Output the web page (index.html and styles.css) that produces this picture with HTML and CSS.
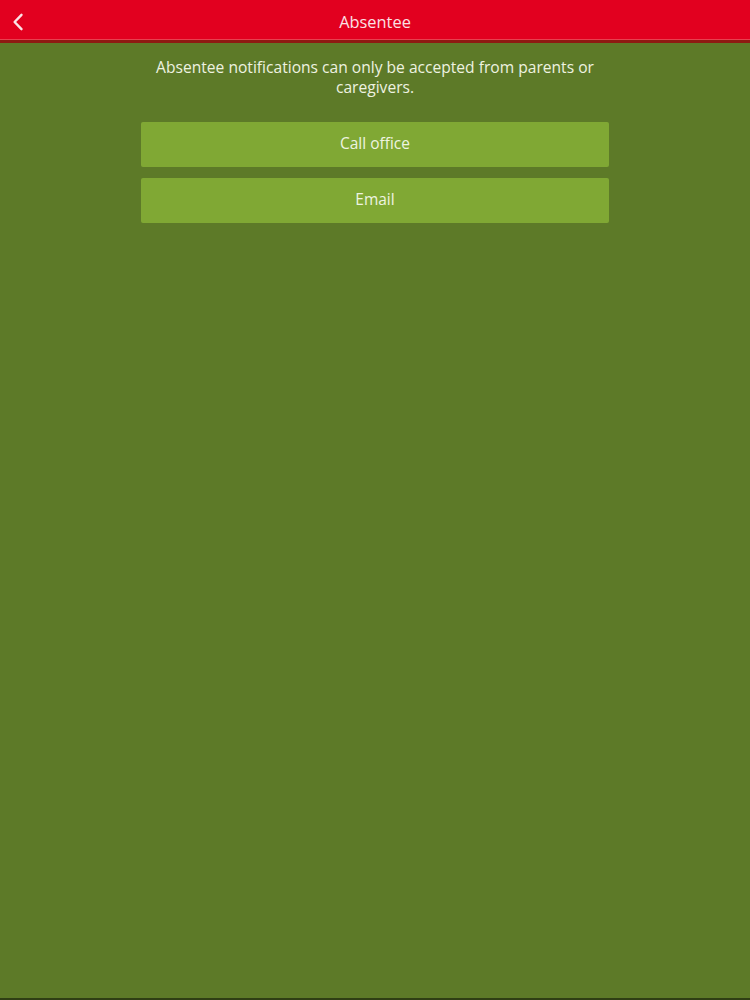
FILE: index.html
```html
<!DOCTYPE html>
<html>
<head>
<meta charset="utf-8">
<link rel="stylesheet" href="styles.css">
</head>
<body>
<div class="screen">
  <header class="topbar">
    <div class="bar-main">
      <button class="back" aria-label="Back">
        <svg width="12" height="18" viewBox="0 0 12 18"><path d="M9.5 1.8 L2.6 9 L9.5 16.2" fill="none" stroke="#fbe3e6" stroke-width="2.4" stroke-linecap="round" stroke-linejoin="round"/></svg>
      </button>
      <h1 class="title">Absentee</h1>
    </div>
    <div class="bar-hi"></div>
    <div class="bar-lo"></div>
  </header>
  <main class="content">
    <p class="notice">Absentee notifications can only be accepted from parents or caregivers.</p>
    <div class="actions">
      <button class="action">Call office</button>
      <button class="action">Email</button>
    </div>
  </main>
</div>
</body>
</html>
```
FILE: styles.css
```css
html, body {
  margin: 0;
  padding: 0;
  height: 100%;
}
body {
  font-family: "Open Sans", "DejaVu Sans", sans-serif;
  background: #5e7a28;
}
.screen {
  height: 1000px;
  display: flex;
  flex-direction: column;
  background: #5d7a28;
  border-bottom: 2px solid #2f3f14;
  box-sizing: border-box;
}
.topbar {
  display: flex;
  flex-direction: column;
}
.bar-main {
  height: 39px;
  background: #e2001f;
  display: flex;
  align-items: center;
  justify-content: center;
  position: relative;
}
.bar-hi {
  height: 1px;
  background: #e8404f;
}
.bar-lo {
  height: 3px;
  background: #8e1a12;
}
.back {
  position: absolute;
  left: 8px;
  top: 12px;
  background: none;
  border: 0;
  padding: 0;
  width: 20px;
  height: 20px;
  display: flex;
  align-items: center;
  justify-content: center;
}
.title {
  margin: 4px 0 0;
  font-size: 16.4px;
  font-weight: 400;
  color: #fbe1e4;
}
.content {
  display: flex;
  flex-direction: column;
  align-items: center;
}
.notice {
  margin: 14px 0 0;
  width: 480px;
  text-align: center;
  font-size: 15.6px;
  line-height: 20px;
  color: #eef2e0;
}
.actions {
  margin-top: 25px;
  width: 468px;
  display: flex;
  flex-direction: column;
  gap: 11px;
}
.action {
  height: 45px;
  border: 0;
  border-radius: 2px;
  background: #80a834;
  color: #eef4e0;
  font-family: "Open Sans", "DejaVu Sans", sans-serif;
  font-size: 15.5px;
  padding: 0 0 3px;
}
```
